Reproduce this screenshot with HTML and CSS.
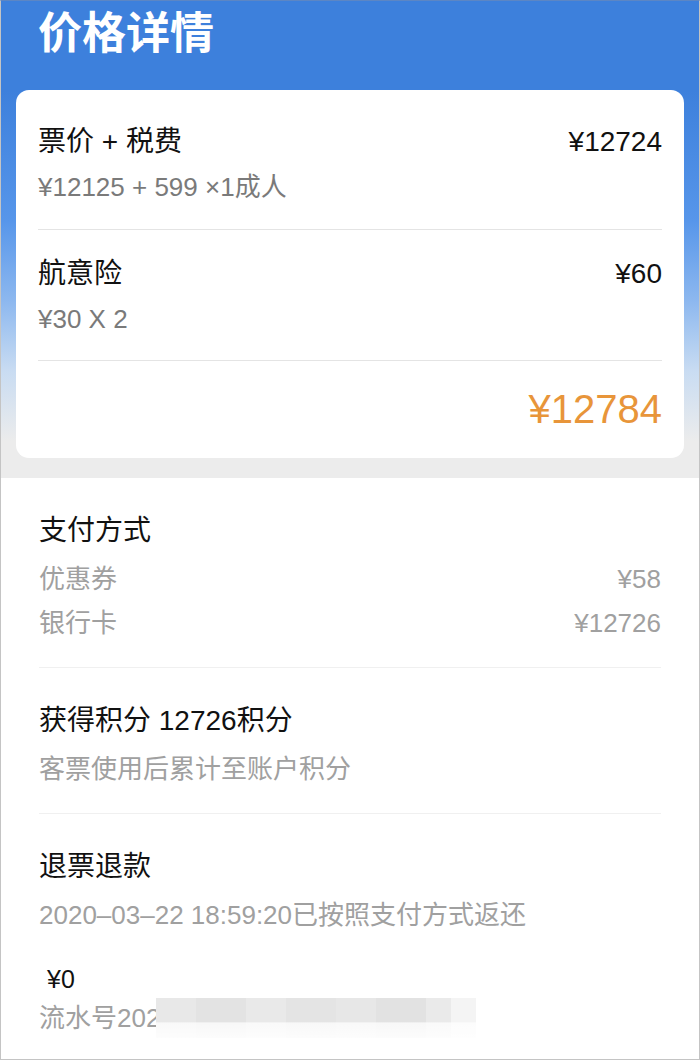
FILE: index.html
```html
<!DOCTYPE html>
<html lang="zh-CN">
<head>
  <meta charset="UTF-8">
  <meta name="viewport" content="width=device-width, initial-scale=1.0">
  <title>价格详情</title>
  <link rel="stylesheet" href="styles.css">
</head>
<body>

<div class="pagina">
  <div class="topo">
    <h2>价格详情</h2>

    <div class="cartao">
      <div class="linha primeira">
        <div class="cabeca">
          <span>票价 + 税费</span>
          <span>¥12724</span>
        </div>
        <div class="sub">¥12125 + 599 ×1成人</div>
      </div>

      <div class="linha">
        <div class="cabeca">
          <span>航意险</span>
          <span>¥60</span>
        </div>
        <div class="sub">¥30 X 2</div>
      </div>

      <div class="total">¥12784</div>
    </div>
  </div>

  <div class="secao">
    <div class="bloco">
      <div class="titulo">支付方式</div>
      <div class="item"><span>优惠券</span><span>¥58</span></div>
      <div class="item"><span>银行卡</span><span>¥12726</span></div>
    </div>

    <div class="bloco">
      <div class="titulo">获得积分 12726积分</div>
      <div class="item">客票使用后累计至账户积分</div>
    </div>

    <div class="bloco ultimo">
      <div class="titulo">退票退款</div>
      <div class="item">2020–03–22 18:59:20已按照支付方式返还</div>
      <div class="valor">¥0</div>
      <div class="item serie">流水号202<span class="borrado"></span></div>
    </div>
  </div>
</div>

</body>
</html>
```

FILE: styles.css
```css
body {
    margin: 0;
    font-family: "Liberation Sans", "Noto Sans CJK SC", sans-serif;
    background-color: #fff;
}

.pagina {
    width: 700px;
    height: 1060px;
    box-sizing: border-box;
    border: 1px solid #c4c4c4;
    border-top-color: #5c86c4;
    overflow: hidden;
}

.topo {
    padding: 0 15px 20px;
    background: linear-gradient(180deg, #3d80dc 0, #3d80dc 90px, #5796ea 220px, #8db8ef 300px, #c9dcf2 370px, #ececec 440px, #ececec 100%);
}

h2 {
    margin: 0;
    height: 89px;
    padding: 7px 0 0 22px;
    box-sizing: border-box;
    color: white;
    font-size: 44px;
    font-weight: bold;
    line-height: 52px;
}

.cartao {
    background-color: white;
    border-radius: 13px;
    padding: 0 22px;
}

.linha {
    padding: 26px 0 24px;
    border-bottom: 1px solid #e4e4e4;
}

.linha.primeira {
    padding: 34px 0 25px;
}

.cabeca {
    display: flex;
    justify-content: space-between;
    font-size: 28px;
    line-height: 36px;
    color: #111;
}

.sub {
    margin-top: 10px;
    font-size: 26px;
    line-height: 34px;
    color: #7a7a7a;
}

.total {
    text-align: right;
    padding: 26px 0 27px;
    font-size: 40px;
    line-height: 44px;
    color: #e8953a;
}

.secao {
    padding: 0 38px;
}

.bloco {
    padding: 35px 0 22px;
    border-bottom: 1px solid #f0f0f0;
}

.bloco.ultimo {
    border-bottom: none;
}

.titulo {
    font-size: 28px;
    line-height: 36px;
    color: #111;
    margin-bottom: 8px;
}

.item {
    display: flex;
    justify-content: space-between;
    font-size: 26px;
    line-height: 44px;
    color: #a0a0a0;
}

.valor {
    margin: 25px 0 0 8px;
    font-size: 25px;
    line-height: 34px;
    color: #111;
}

.item.serie {
    justify-content: flex-start;
    align-items: center;
}

.borrado {
    display: inline-block;
    width: 320px;
    height: 40px;
    margin-left: -4px;
    background:
        linear-gradient(180deg, rgba(255,255,255,0) 0, rgba(255,255,255,0) 60%, rgba(255,255,255,0.75) 62%, rgba(255,255,255,0.9) 100%),
        linear-gradient(90deg, #e8e8e8 0, #e8e8e8 40px, #e3e3e3 40px, #e3e3e3 90px, #e9e9e9 90px, #e9e9e9 130px, #e4e4e4 130px, #e4e4e4 180px, #e7e7e7 180px, #e7e7e7 220px, #e2e2e2 220px, #e2e2e2 270px, #eaeaea 270px, #eaeaea 295px, #f4f4f4 295px);
}
```
